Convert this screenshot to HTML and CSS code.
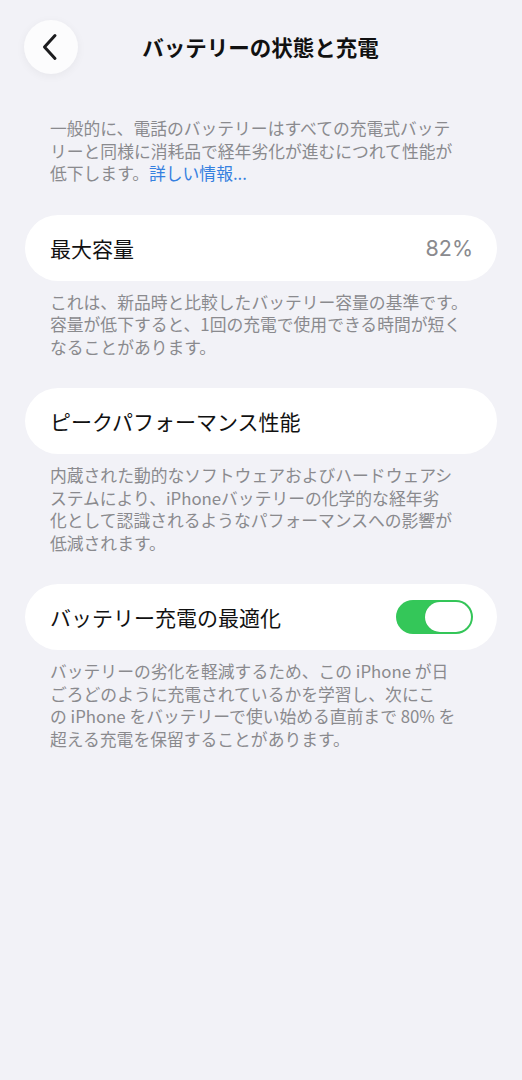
FILE: index.html
```html
<!DOCTYPE html>
<html lang="ja">
<head>
<meta charset="utf-8">
<title>バッテリーの状態と充電</title>
<link rel="stylesheet" href="styles.css">
</head>
<body>
<div class="screen">
  <header class="nav">
    <button class="back" aria-label="戻る">
      <svg width="16" height="28" viewBox="0 0 16 28"><path d="M13 2.5 L2.5 14 L13 25.5" fill="none" stroke="#1c1c1e" stroke-width="3" stroke-linecap="round" stroke-linejoin="round"/></svg>
    </button>
    <h1 class="title">バッテリーの状態と充電</h1>
    <span class="spacer"></span>
  </header>

  <p class="note intro">一般的に、電話のバッテリーはすべての充電式バッテ<br>リーと同様に消耗品で経年劣化が進むにつれて性能が<br>低下します。<a class="link" href="#">詳しい情報...</a></p>

  <section class="group">
    <div class="card">
      <span class="label">最大容量</span>
      <span class="value">82%</span>
    </div>
    <p class="note">これは、新品時と比較したバッテリー容量の基準です。<br>容量が低下すると、1回の充電で使用できる時間が短く<br>なることがあります。</p>
  </section>

  <section class="group">
    <div class="card">
      <span class="label">ピークパフォーマンス性能</span>
    </div>
    <p class="note">内蔵された動的なソフトウェアおよびハードウェアシ<br>ステムにより、iPhoneバッテリーの化学的な経年劣<br>化として認識されるようなパフォーマンスへの影響が<br>低減されます。</p>
  </section>

  <section class="group">
    <div class="card">
      <span class="label">バッテリー充電の最適化</span>
      <span class="toggle on"><span class="knob"></span></span>
    </div>
    <p class="note">バッテリーの劣化を軽減するため、この iPhone が日<br>ごろどのように充電されているかを学習し、次にこ<br>の iPhone をバッテリーで使い始める直前まで 80% を<br>超える充電を保留することがあります。</p>
  </section>
</div>
</body>
</html>
```

FILE: styles.css
```css
html, body {
  margin: 0;
  padding: 0;
  background: #f2f2f7;
}
body {
  font-family: "Noto Sans CJK JP", "Noto Sans", sans-serif;
  color: #000;
}
.screen {
  width: 522px;
  min-height: 1080px;
  box-sizing: border-box;
  padding: 20px 25px 0 25px;
}
.nav {
  display: grid;
  grid-template-columns: 54px 1fr 54px;
  align-items: center;
  height: 54px;
  margin-left: -1px;
}
.back {
  width: 54px;
  height: 54px;
  border-radius: 50%;
  border: none;
  background: #fcfcfd;
  box-shadow: 0 2px 10px rgba(0,0,0,0.05);
  display: flex;
  align-items: center;
  justify-content: center;
  padding: 0 3px 0 0;
  cursor: pointer;
}
.title {
  margin: 0;
  text-align: center;
  font-size: 21.5px;
  font-weight: 700;
  line-height: 1;
  color: #111;
}
.note {
  margin: 0;
  padding: 0 0 0 25px;
  font-size: 16.8px;
  line-height: 22.5px;
  color: #8a8a8e;
  white-space: nowrap;
}
.intro {
  margin-top: 43px;
}
.link {
  color: #3580e0;
  text-decoration: none;
}
.group {
  margin-top: 30px;
}
.card {
  height: 66px;
  border-radius: 33px;
  background: #fff;
  display: flex;
  align-items: center;
  justify-content: space-between;
  padding: 0 24px 0 25px;
  box-sizing: border-box;
}
.card + .note {
  margin-top: 10px;
}
.label {
  font-size: 21px;
  color: #111;
}
.value {
  font-family: "Inter", "Noto Sans", sans-serif;
  font-size: 21.5px;
  color: #8a8a8e;
}
.toggle {
  width: 77px;
  height: 34px;
  border-radius: 17px;
  background: #34c759;
  display: flex;
  align-items: center;
  justify-content: flex-end;
  padding: 0 2px;
  box-sizing: border-box;
}
.knob {
  width: 46px;
  height: 30px;
  border-radius: 15px;
  background: #fff;
  box-shadow: 0 0 1px rgba(0,0,0,0.15);
}
```
